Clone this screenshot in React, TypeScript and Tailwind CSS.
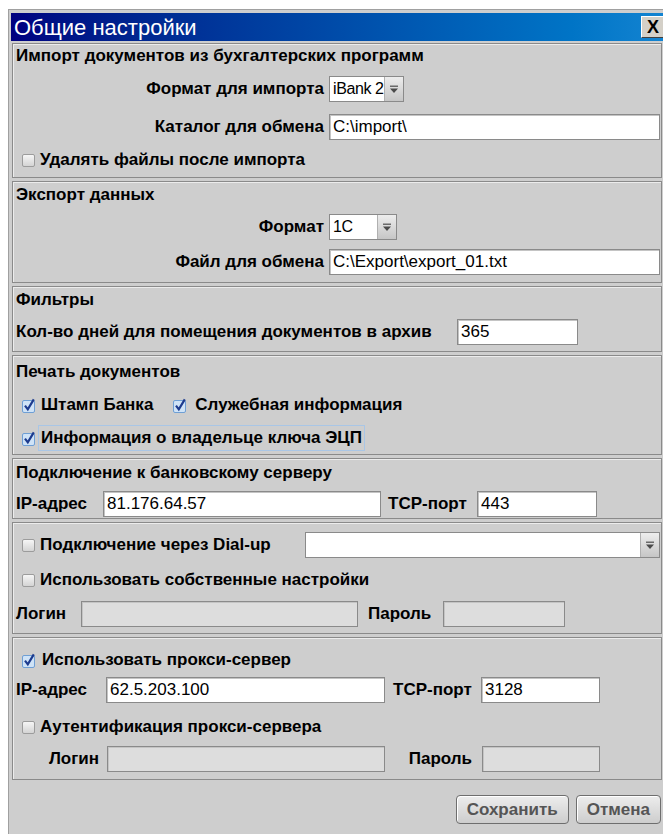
import React from 'react';

const ui = "font-['Liberation_Sans',Arial,sans-serif]";

function Check({ checked = false }: { checked?: boolean }) {
  if (checked) {
    return (
      <svg width="15" height="15" viewBox="0 0 15 15" className="shrink-0">
        <rect x="0.5" y="2.5" width="12" height="12" rx="1.5" fill="#cfe3f7" stroke="#6f9fd4" />
        <path d="M3 7.6 L5.8 11.3 L11.8 1.4" fill="none" stroke="#1d3b8e" strokeWidth="2.2" />
      </svg>
    );
  }
  return (
    <span className="block h-[13px] w-[13px] shrink-0 rounded-[2px] border border-[#9c9c9c] bg-gradient-to-b from-[#f6f6f6] to-[#d4d4d4]" />
  );
}

function CheckRow({ label, checked, className = '' }: { label: string; checked?: boolean; className?: string }) {
  return (
    <div className={`flex h-[24px] items-center gap-[5px] whitespace-nowrap pl-[6px] ${className}`}>
      <Check checked={checked} />
      <span className="font-bold">{label}</span>
    </div>
  );
}

function Field({ value = '', className = '', disabled = false }: { value?: string; className?: string; disabled?: boolean }) {
  return (
    <input
      readOnly
      value={value}
      className={`h-[26px] border border-[#8a8a8a] px-[3px] text-[17px] text-black outline-none shadow-[inset_1px_1px_0_#c4c4c4] ${
        disabled ? 'bg-[#dddddd]' : 'bg-white'
      } ${className}`}
    />
  );
}

function Arrow() {
  return (
    <svg width="10" height="9" viewBox="0 0 10 9">
      <rect x="1" y="0.5" width="8" height="1.5" fill="#6a6a6a" />
      <path d="M1 3.5 H9 L5 8 Z" fill="#4a4a4a" />
    </svg>
  );
}

function Combo({ value = '', className = '' }: { value?: string; className?: string }) {
  return (
    <div className={`flex h-[26px] border border-[#8a8a8a] bg-white ${className}`}>
      <span className="flex flex-1 items-center whitespace-nowrap pl-[3px] text-[16px] tracking-[-0.4px]">{value}</span>
      <span className="flex w-[19px] shrink-0 items-center justify-center border-l border-[#b0b0b0] bg-gradient-to-b from-[#ededed] to-[#c6c6c6]">
        <Arrow />
      </span>
    </div>
  );
}

function Section({ className = '', children }: { className?: string; children: React.ReactNode }) {
  return (
    <div className={`border border-[#8a8a8a] pl-[3px] pr-[1px] shadow-[inset_1px_1px_0_#ececec] ${className}`}>
      {children}
    </div>
  );
}

function Title({ children }: { children: React.ReactNode }) {
  return <div className="flex h-[24px] items-center whitespace-nowrap font-bold">{children}</div>;
}

function Button({ children }: { children: React.ReactNode }) {
  return (
    <button className="h-[29px] rounded-[4px] border border-[#6e6e6e] bg-gradient-to-b from-[#ededed] to-[#cdcdcd] px-[10px] font-bold text-[#555555] shadow-[inset_1px_1px_0_#ffffff]">
      {children}
    </button>
  );
}

export default function App() {
  return (
    <div className={`h-[834px] w-[663px] overflow-hidden bg-white ${ui} text-[17px] text-black`}>
      <div className="ml-[8px] mt-[9px] w-[661px] border-l border-t border-[#a0a0a0] bg-[#cecece] pl-[2px] pt-[3px]">
        {/* caption */}
        <div className="flex h-[28px] items-center bg-gradient-to-r from-[#000080] to-[#1485d2] pl-[3px] pr-[4px]">
          <span className="text-[22px] text-white">Общие настройки</span>
          <span className="ml-auto flex h-[22px] w-[24px] items-center justify-center border border-t-white border-l-white border-r-[#404040] border-b-[#404040] bg-[#d4d0c8] text-[18px] font-bold leading-none">
            X
          </span>
        </div>

        <div className="ml-[1px] mt-[2px] flex w-[650px] flex-col gap-[3px] whitespace-nowrap">
          <Section className="pb-[5px]">
            <Title>Импорт документов из бухгалтерских программ</Title>
            <div className="mt-[8px] flex items-center">
              <span className="w-[313px] pr-[5px] text-right font-bold">Формат для импорта</span>
              <Combo value="iBank 2" className="w-[75px]" />
            </div>
            <div className="mt-[12px] flex items-center">
              <span className="w-[313px] pr-[5px] text-right font-bold">Каталог для обмена</span>
              <Field value={'C:\\import\\'} className="flex-1" />
            </div>
            <CheckRow className="mt-[8px]" label="Удалять файлы после импорта" />
          </Section>

          <Section className="pb-[7px] pt-[1px]">
            <Title>Экспорт данных</Title>
            <div className="mt-[7px] flex items-center">
              <span className="w-[313px] pr-[5px] text-right font-bold">Формат</span>
              <Combo value="1C" className="w-[68px]" />
            </div>
            <div className="mt-[9px] flex items-center">
              <span className="w-[313px] pr-[5px] text-right font-bold">Файл для обмена</span>
              <Field value={'C:\\Export\\export_01.txt'} className="flex-1" />
            </div>
          </Section>

          <Section className="pb-[6px] pt-[1px]">
            <Title>Фильтры</Title>
            <div className="mt-[7px] flex items-center">
              <span className="w-[441px] font-bold">Кол-во дней для помещения документов в архив</span>
              <Field value="365" className="w-[121px]" />
            </div>
          </Section>

          <Section className="pb-[3px] pt-[4px]">
            <Title>Печать документов</Title>
            <div className="mt-[9px] flex h-[24px] items-center pl-[6px]">
              <Check checked />
              <span className="ml-[4px] font-bold">Штамп Банка</span>
              <span className="ml-[20px]">
                <Check checked />
              </span>
              <span className="ml-[7px] font-bold">Служебная информация</span>
            </div>
            <div className="mt-[8px] flex h-[26px] items-center pl-[6px]">
              <Check checked />
              <span className="ml-[1px] flex h-[26px] items-center border border-[#a9c6e6] px-[2px] font-bold">
                Информация о владельце ключа ЭЦП
              </span>
            </div>
          </Section>

          <Section className="pb-[1px] pt-[2px]">
            <Title>Подключение к банковскому серверу</Title>
            <div className="mt-[6px] flex items-center">
              <span className="w-[87px] font-bold">IP-адрес</span>
              <Field value="81.176.64.57" className="w-[278px]" />
              <span className="w-[96px] pl-[7px] font-bold">TCP-порт</span>
              <Field value="443" className="w-[120px]" />
            </div>
          </Section>

          <Section className="pb-[6px] pt-[9px]">
            <div className="flex items-center">
              <CheckRow label="Подключение через Dial-up" className="w-[289px]" />
              <Combo className="flex-1" />
            </div>
            <CheckRow className="mt-[10px]" label="Использовать собственные настройки" />
            <div className="mt-[9px] flex items-center">
              <span className="w-[65px] font-bold">Логин</span>
              <Field disabled className="w-[277px]" />
              <span className="w-[85px] pl-[10px] font-bold">Пароль</span>
              <Field disabled className="w-[122px]" />
            </div>
          </Section>

          <Section className="pb-[7px] pt-[10px]">
            <CheckRow checked label="Использовать прокси-сервер" />
            <div className="mt-[5px] flex items-center">
              <span className="w-[90px] font-bold">IP-адрес</span>
              <Field value="62.5.203.100" className="w-[279px]" />
              <span className="w-[96px] pl-[8px] font-bold">TCP-порт</span>
              <Field value="3128" className="w-[119px]" />
            </div>
            <CheckRow className="mt-[12px]" label="Аутентификация прокси-сервера" />
            <div className="mt-[7px] flex items-center">
              <span className="w-[91px] pr-[8px] text-right font-bold">Логин</span>
              <Field disabled className="w-[278px]" />
              <span className="w-[97px] pr-[10px] text-right font-bold">Пароль</span>
              <Field disabled className="w-[118px]" />
            </div>
          </Section>

          <div className="flex h-[60px] justify-end gap-[7px] pr-[1px] pt-[12px]">
            <Button>Сохранить</Button>
            <Button>Отмена</Button>
          </div>
        </div>
      </div>
    </div>
  );
}
